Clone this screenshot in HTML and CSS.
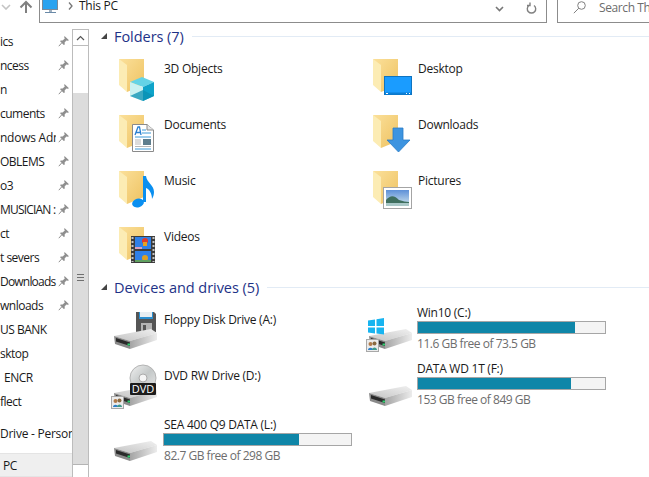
FILE: index.html
```html
<!DOCTYPE html>
<html lang="en">
<head>
  <meta charset="UTF-8">
  <title>This PC</title>
  <link rel="stylesheet" href="styles.css">
</head>
<body>
  <!-- Shared icon parts -->
  <svg class="svg-defs" aria-hidden="true">
    <defs>
      <linearGradient id="folder-back" x1="0" y1="0" x2="1" y2="1">
        <stop offset="0" stop-color="#fbe09a"/>
        <stop offset="1" stop-color="#eec261"/>
      </linearGradient>
      <linearGradient id="drive-top" x1="0" y1="1" x2="1" y2="0">
        <stop offset="0" stop-color="#c4c4c4"/>
        <stop offset="1" stop-color="#f0f0f0"/>
      </linearGradient>
      <linearGradient id="drive-side" x1="0" y1="0" x2="1" y2="0">
        <stop offset="0" stop-color="#a4a4a4"/>
        <stop offset="1" stop-color="#ececec"/>
      </linearGradient>
      <linearGradient id="disc" x1="0" y1="0" x2="1" y2="1">
        <stop offset="0" stop-color="#f2f2f2"/>
        <stop offset="0.5" stop-color="#c4c8c8"/>
        <stop offset="1" stop-color="#e8e8e8"/>
      </linearGradient>
      <linearGradient id="sky" x1="0" y1="0" x2="0" y2="1">
        <stop offset="0" stop-color="#5d90d8"/>
        <stop offset="1" stop-color="#d5e8ee"/>
      </linearGradient>
      <symbol id="folder" viewBox="0 0 48 48">
        <path d="M5 7H30V33L13 40Z" fill="url(#folder-back)"/>
        <path d="M5 7L13 13V40L5 33Z" fill="#fcecb4"/>
      </symbol>
      <symbol id="drive" viewBox="0 0 48 48" overflow="visible">
        <path d="M0 33L37 26L43 30L16 38Z" fill="url(#drive-top)"/>
        <path d="M16 38L43 30V37L16 46Z" fill="url(#drive-side)"/>
        <path d="M0 33L16 38V46L1 41Z" fill="#8a8a8a"/>
        <path d="M2 35L16 39.500V43L2 38.500Z" fill="#2a2a2a"/>
        <rect x="13.500" y="40.500" width="2.500" height="2" fill="#2fd06f"/>
      </symbol>
      <symbol id="share" viewBox="0 0 13 13">
        <rect x="0.5" y="0.5" width="12" height="12" fill="#ececec" stroke="#a8a8a8"/>
        <circle cx="4.5" cy="5" r="2" fill="#b07a4a"/>
        <path d="M2 11C2 8 7 8 7 11Z" fill="#2f7fc8"/>
        <circle cx="8.5" cy="4.5" r="2" fill="#8a6a40"/>
        <path d="M6 11C6 7.500 11 7.500 11 11Z" fill="#3f9a8a"/>
      </symbol>
      <symbol id="pin" viewBox="0 0 12 12">
        <path d="M6.500 1L11 5.200L9.800 5.800L8.400 5.400L6.600 7.600L6.800 9.600L5.800 10L2.200 6.400L2.600 5.400L4.600 5.600L6.800 3.600L6.200 2.200Z" fill="#8f8f8f"/>
        <path d="M3.600 8L0.800 11.200" stroke="#8f8f8f" fill="none"/>
      </symbol>
    </defs>
  </svg>

  <div class="app">
    <!-- Toolbar -->
    <div class="toolbar">
      <svg class="recent" width="10" height="6" viewBox="0 0 10 6"><path d="M1 1L5 5L9 1" fill="none" stroke="#c4c4c4" stroke-width="1.6"/></svg>
      <svg class="up" width="14" height="14" viewBox="0 0 14 14"><path d="M7 13V2M1.500 7.500L7 2L12.500 7.500" fill="none" stroke="#808080" stroke-width="2"/></svg>
      <div class="address">
        <svg class="pc-icon" width="17" height="14" viewBox="0 0 17 14">
          <rect x="0.5" y="-3" width="15" height="12.500" fill="#2aa3f0" stroke="#7a8a9a"/>
          <path d="M7 10H10V12H7Z" fill="#a0b0c0"/>
          <path d="M3 12.500H14" stroke="#6a8aa8"/>
        </svg>
        <svg class="crumb-sep" width="5" height="8" viewBox="0 0 5 8"><path d="M1 0.500L4 4L1 7.500" fill="none" stroke="#777" stroke-width="1.300"/></svg>
        <span class="crumb">This PC</span>
        <svg class="addr-down" width="9" height="6" viewBox="0 0 9 6"><path d="M1 1L4.500 4.500L8 1" fill="none" stroke="#777" stroke-width="1.600"/></svg>
        <svg class="refresh" width="11" height="12" viewBox="0 0 11 12"><path d="M3 3.500A4.200 4.200 0 1 0 8 3.500M4 0.500V3.500H1" fill="none" stroke="#808080" stroke-width="1.400"/></svg>
      </div>
      <div class="search">
        <svg width="13" height="13" viewBox="0 0 13 13"><circle cx="8.500" cy="4.500" r="3.800" fill="none" stroke="#808080"/><path d="M5.800 7.200L0.800 12.200" stroke="#808080"/></svg>
        <span class="search-text">Search Th</span>
      </div>
    </div>

    <div class="content">
      <!-- Navigation pane -->
      <nav class="nav">
        <div class="nav-item">ics<svg class="pin"><use href="#pin"/></svg></div>
        <div class="nav-item">ncess<svg class="pin"><use href="#pin"/></svg></div>
        <div class="nav-item">n<svg class="pin"><use href="#pin"/></svg></div>
        <div class="nav-item">cuments<svg class="pin"><use href="#pin"/></svg></div>
        <div class="nav-item"><span class="nav-clip">ndows Adm</span><svg class="pin"><use href="#pin"/></svg></div>
        <div class="nav-item">OBLEMS<svg class="pin"><use href="#pin"/></svg></div>
        <div class="nav-item">o3<svg class="pin"><use href="#pin"/></svg></div>
        <div class="nav-item nav-tight">MUSICIAN :<svg class="pin"><use href="#pin"/></svg></div>
        <div class="nav-item">ct<svg class="pin"><use href="#pin"/></svg></div>
        <div class="nav-item">t severs<svg class="pin"><use href="#pin"/></svg></div>
        <div class="nav-item nav-tight">Downloads<svg class="pin"><use href="#pin"/></svg></div>
        <div class="nav-item">wnloads<svg class="pin"><use href="#pin"/></svg></div>
        <div class="nav-item">US BANK</div>
        <div class="nav-item">sktop</div>
        <div class="nav-item nav-indent">ENCR</div>
        <div class="nav-item">flect</div>
        <div class="nav-item nav-gap"><span class="nav-clip nav-wide">Drive - Person</span></div>
        <div class="nav-item nav-gap nav-selected">PC</div>
      </nav>

      <!-- Nav scrollbar -->
      <div class="scrollbar">
        <div class="scroll-btn">
          <svg width="9" height="6" viewBox="0 0 9 6"><path d="M1 5L4.500 1.500L8 5" fill="none" stroke="#555" stroke-width="1.200"/></svg>
        </div>
        <div class="scroll-gap"></div>
        <div class="scroll-thumb"><div class="grip"></div></div>
      </div>

      <main class="main">
        <!-- Folders -->
        <section>
          <h2 class="group-title">
            <svg class="caret" width="6" height="6" viewBox="0 0 6 6"><path d="M6 0V6H0Z" fill="#444"/></svg>
            <span class="group-name">Folders (7)</span>
            <span class="group-line"></span>
          </h2>
          <div class="tiles">
            <div class="tile">
              <svg class="tile-icon" viewBox="0 0 48 48">
                <use href="#folder"/>
                <path d="M28 25L40 30L29 35L16 30Z" fill="#63d3e6"/>
                <path d="M16 30L29 35V49L16 44Z" fill="#c9f1f1"/>
                <path d="M29 35L40 30V44L29 49Z" fill="#0ea3c9"/>
                <path d="M16 44L29 38L40 44L29 49Z" fill="#0a8fb2" opacity="0.75"/>
              </svg>
              <div class="tile-label">3D Objects</div>
            </div>
            <div class="tile">
              <svg class="tile-icon" viewBox="0 0 48 48">
                <use href="#folder"/>
                <rect x="16.500" y="24.500" width="27" height="18" fill="#1a9cff" stroke="#0f74c0"/>
                <path d="M17 41.500H43" stroke="#0b7fd6" stroke-width="2"/>
                <path d="M18 41.500H20M38 41.500H39M41 41.500H42" stroke="#fff"/>
              </svg>
              <div class="tile-label">Desktop</div>
            </div>
            <div class="tile">
              <svg class="tile-icon" viewBox="0 0 48 48">
                <use href="#folder"/>
                <path d="M18.500 16.500H33L39.500 22V43.500H18.500Z" fill="#fff" stroke="#8a8a8a"/>
                <path d="M33 16.500V22H39.500" fill="#e8e8e8" stroke="#8a8a8a"/>
                <path d="M21 27L24 19H25.500L27 27M22 24.500H26" fill="none" stroke="#2a7fd0" stroke-width="1.300"/>
                <path d="M28 22H32M28 25H37M21 29H37M21 41H37" stroke="#3d9ad8"/>
                <rect x="29" y="31" width="8" height="6" fill="#5d7d8d"/>
                <path d="M21 32H27M21 34H27M21 36H27M21 38.500H37" stroke="#b8b8b8"/>
              </svg>
              <div class="tile-label">Documents</div>
            </div>
            <div class="tile">
              <svg class="tile-icon" viewBox="0 0 48 48">
                <use href="#folder"/>
                <path d="M25 20H35V32H42L30.500 44L19 32H25Z" fill="#3d94e0" stroke="#2a7cc8" stroke-width="0.800"/>
              </svg>
              <div class="tile-label">Downloads</div>
            </div>
            <div class="tile">
              <svg class="tile-icon" viewBox="0 0 48 48">
                <use href="#folder"/>
                <ellipse cx="24" cy="39" rx="6" ry="4.300" fill="#0a8ff0" transform="rotate(-15 24 39)"/>
                <path d="M29 12H32C33 19 40 21 40 28C40 31 39 33 38 35C38 29 35 25 32 24V38H29Z" fill="#0a8ff0"/>
              </svg>
              <div class="tile-label">Music</div>
            </div>
            <div class="tile">
              <svg class="tile-icon" viewBox="0 0 48 48">
                <use href="#folder"/>
                <rect x="15.500" y="23.500" width="28" height="21" fill="#fff" stroke="#a4a4a4"/>
                <rect x="18" y="26" width="23" height="16" fill="url(#sky)"/>
                <path d="M18 36C23 30 27 32 31 36C35 37 38 38 41 38V40H18Z" fill="#3f6f5f"/>
                <path d="M18 39H41V42H18Z" fill="#a9c8c8"/>
              </svg>
              <div class="tile-label">Pictures</div>
            </div>
            <div class="tile">
              <svg class="tile-icon" viewBox="0 0 48 48">
                <use href="#folder"/>
                <rect x="17" y="16" width="24" height="27" fill="#3c3c3c"/>
                <path d="M18.500 17V42M39.500 17V42" stroke="#c4c4c4" stroke-width="2" stroke-dasharray="2 2"/>
                <rect x="21" y="17" width="16" height="12" fill="#2f80e8"/>
                <rect x="21" y="31" width="16" height="11" fill="#2f80e8"/>
                <circle cx="31" cy="21" r="3" fill="#e03a2a"/>
                <path d="M29 22H33V26H29Z" fill="#e8a020"/>
                <path d="M21 27H28V29H21Z" fill="#d8a0c0"/>
                <circle cx="31" cy="38" r="3" fill="#e0a020"/>
                <path d="M21 40H37V42H21Z" fill="#60a060"/>
              </svg>
              <div class="tile-label">Videos</div>
            </div>
          </div>
        </section>

        <!-- Devices and drives -->
        <section>
          <h2 class="group-title">
            <svg class="caret" width="6" height="6" viewBox="0 0 6 6"><path d="M6 0V6H0Z" fill="#444"/></svg>
            <span class="group-name">Devices and drives (5)</span>
            <span class="group-line"></span>
          </h2>
          <div class="tiles">
            <div class="tile">
              <svg class="tile-icon" viewBox="0 0 48 48">
                <path d="M22 9H40L42 11V29H22Z" fill="#555"/>
                <rect x="25" y="9" width="14" height="7" fill="#2b8fd0"/>
                <rect x="26" y="9" width="12" height="5" fill="#e8eef2"/>
                <rect x="27" y="20" width="11" height="9" fill="#b4b4b4"/>
                <rect x="29" y="22" width="3" height="6" fill="#555"/>
                <use href="#drive"/>
              </svg>
              <div class="tile-label">Floppy Disk Drive (A:)</div>
            </div>
            <div class="tile tile-drive">
              <svg class="tile-icon" viewBox="0 0 48 48">
                <g transform="translate(1 0)"><use href="#drive"/></g>
                <path d="M0 17.500L7 16.500V23H0ZM8.500 16.200L16 15V23H8.500ZM0 24.500H7V30.500L0 29.500ZM8.500 24.500H16V31.500L8.500 30.500Z" fill="#18b4f0"/>
                <use href="#share" x="-2" y="36" width="13" height="13"/>
              </svg>
              <div class="drive-info">
                <div class="tile-label">Win10 (C:)</div>
                <div class="meter"><div class="meter-fill" style="width: 84%"></div></div>
                <div class="tile-detail">11.6 GB free of 73.5 GB</div>
              </div>
            </div>
            <div class="tile">
              <svg class="tile-icon" viewBox="0 0 48 48">
                <g transform="translate(0 1)"><use href="#drive"/></g>
                <circle cx="29" cy="19" r="13" fill="url(#disc)" stroke="#b4b4b4"/>
                <circle cx="29" cy="19" r="4" fill="#f4f4f4" stroke="#aaa"/>
                <rect x="16" y="24" width="26" height="12" rx="1" fill="#1c1c1c"/>
                <text class="dvd-text" x="29" y="34" text-anchor="middle">DVD</text>
                <use href="#share" x="-3" y="37" width="13" height="13"/>
              </svg>
              <div class="tile-label">DVD RW Drive (D:)</div>
            </div>
            <div class="tile tile-drive">
              <svg class="tile-icon" viewBox="0 0 48 48">
                <g transform="translate(1 1)"><use href="#drive"/></g>
              </svg>
              <div class="drive-info">
                <div class="tile-label">DATA WD 1T (F:)</div>
                <div class="meter"><div class="meter-fill" style="width: 82%"></div></div>
                <div class="tile-detail">153 GB free of 849 GB</div>
              </div>
            </div>
            <div class="tile tile-drive tile-first">
              <svg class="tile-icon" viewBox="0 0 48 48">
                <use href="#drive"/>
              </svg>
              <div class="drive-info">
                <div class="tile-label">SEA 400 Q9 DATA (L:)</div>
                <div class="meter"><div class="meter-fill" style="width: 72%"></div></div>
                <div class="tile-detail">82.7 GB free of 298 GB</div>
              </div>
            </div>
          </div>
        </section>
      </main>
    </div>
  </div>
</body>
</html>
```

FILE: styles.css
```css
/* General Styles */
html, body {
  margin: 0;
  padding: 0;
  height: 100%;
  overflow: hidden;
  background: #fff;
}

body {
  font-family: 'Open Sans', 'Noto Sans', sans-serif;
  font-size: 12px;
  letter-spacing: -0.25px;
  color: #1a1a1a;
}

.svg-defs {
  position: absolute;
  width: 0;
  height: 0;
}

.app {
  display: flex;
  flex-direction: column;
  width: 649px;
  height: 477px;
  overflow: hidden;
}

/* Toolbar */
.toolbar {
  display: flex;
  align-items: flex-start;
  height: 23px;
  flex: none;
}

.recent {
  margin: 4px 0 0 1px;
  flex: none;
}

.up {
  margin: 0 0 0 8px;
  flex: none;
}

.address {
  display: flex;
  align-items: flex-start;
  width: 506px;
  height: 22px;
  margin-left: 6px;
  border: 1px solid #8c8c8c;
  border-top: none;
  flex: none;
}

.pc-icon {
  margin-left: 2px;
  flex: none;
}

.crumb-sep {
  margin: 2px 0 0 9px;
  flex: none;
}

.crumb {
  margin: -2px 0 0 6px;
  line-height: 16px;
}

.addr-down {
  margin: 6px 0 0 auto;
  flex: none;
}

.refresh {
  margin: 2px 9px 0 22px;
  flex: none;
}

.search {
  display: flex;
  align-items: flex-start;
  flex: 1;
  height: 22px;
  margin-left: 10px;
  border: 1px solid #8c8c8c;
  border-top: none;
  border-right: none;
  padding-left: 15px;
}

.search svg {
  margin-top: 1px;
  flex: none;
}

.search-text {
  margin-left: 13px;
  color: #6d6d6d;
  line-height: 16px;
  white-space: nowrap;
  letter-spacing: -0.4px;
}

/* Navigation pane */
.content {
  display: flex;
  flex: 1;
  min-height: 0;
}

.nav {
  width: 72px;
  padding-top: 6px;
  flex: none;
  overflow: hidden;
  letter-spacing: -0.5px;
}

.nav-item {
  display: flex;
  align-items: center;
  height: 24px;
  white-space: nowrap;
}

.nav-tight {
  letter-spacing: -0.8px;
}

.nav-clip {
  display: block;
  width: 56px;
  overflow: hidden;
  letter-spacing: -0.25px;
}

.nav-wide {
  width: 72px;
}

.nav-indent {
  padding-left: 4px;
}

.nav-gap {
  margin-top: 8px;
}

.nav-selected {
  padding-left: 3px;
  background: #efefef;
  border: 1px solid #e4e4e4;
  border-left: none;
  border-right: none;
  height: 22px;
}

.pin {
  width: 12px;
  height: 12px;
  margin-left: auto;
  margin-right: 2px;
  flex: none;
}

/* Nav scrollbar */
.scrollbar {
  display: flex;
  flex-direction: column;
  width: 15px;
  margin-top: 6px;
  border: 1px solid #bcbcbc;
  border-bottom: none;
  flex: none;
}

.scroll-btn {
  display: flex;
  align-items: center;
  justify-content: center;
  height: 15px;
  border-bottom: 1px solid #bcbcbc;
}

.scroll-gap {
  height: 47px;
}

.scroll-thumb {
  display: flex;
  align-items: center;
  justify-content: center;
  height: 371px;
  background: #dcdcdc;
  border-bottom: 1px solid #b4b4b4;
}

.grip {
  width: 7px;
  height: 9px;
  background: repeating-linear-gradient(#707070 0 1px, transparent 1px 3px);
}

/* Main area */
.main {
  flex: 1;
  min-width: 0;
  padding-top: 2px;
}

.group-title {
  display: flex;
  align-items: center;
  height: 22px;
  margin: 0 0 5px;
  padding-left: 12px;
  font-size: 14.5px;
  font-weight: normal;
  letter-spacing: -0.05px;
  color: #1e3287;
}

.caret {
  flex: none;
}

.group-name {
  margin-left: 7px;
  white-space: nowrap;
}

.group-line {
  flex: 1;
  height: 1px;
  margin-left: 8px;
  background: #e2ebf5;
}

.tiles {
  display: grid;
  grid-template-columns: 254px 254px;
  grid-auto-rows: 56px;
  margin-left: 25px;
}

.tile {
  display: flex;
  align-items: flex-start;
}

.tile-icon {
  width: 48px;
  height: 48px;
  margin-right: 2px;
  overflow: visible;
  flex: none;
}

.tile-label {
  margin-top: 9px;
  line-height: 16px;
  white-space: nowrap;
}

.drive-info .tile-label {
  margin-top: 2px;
}

.drive-info {
  width: 189px;
}

.tile-drive .drive-info {
  margin-left: -1px;
}

.tile-first .drive-info {
  margin-left: 0;
}

.tile-first .meter {
  margin-left: -1px;
  margin-right: 1px;
}

.tile-detail {
  margin-top: 2px;
  line-height: 16px;
  color: #6d6d6d;
  white-space: nowrap;
  letter-spacing: -0.48px;
}

.meter {
  height: 11px;
  border: 1px solid #a6a6a6;
  background: #f4f4f4;
}

.meter-fill {
  height: 100%;
  background: #0f86a8;
}

.dvd-text {
  font-size: 11px;
  letter-spacing: 0;
  fill: #fff;
}
```
